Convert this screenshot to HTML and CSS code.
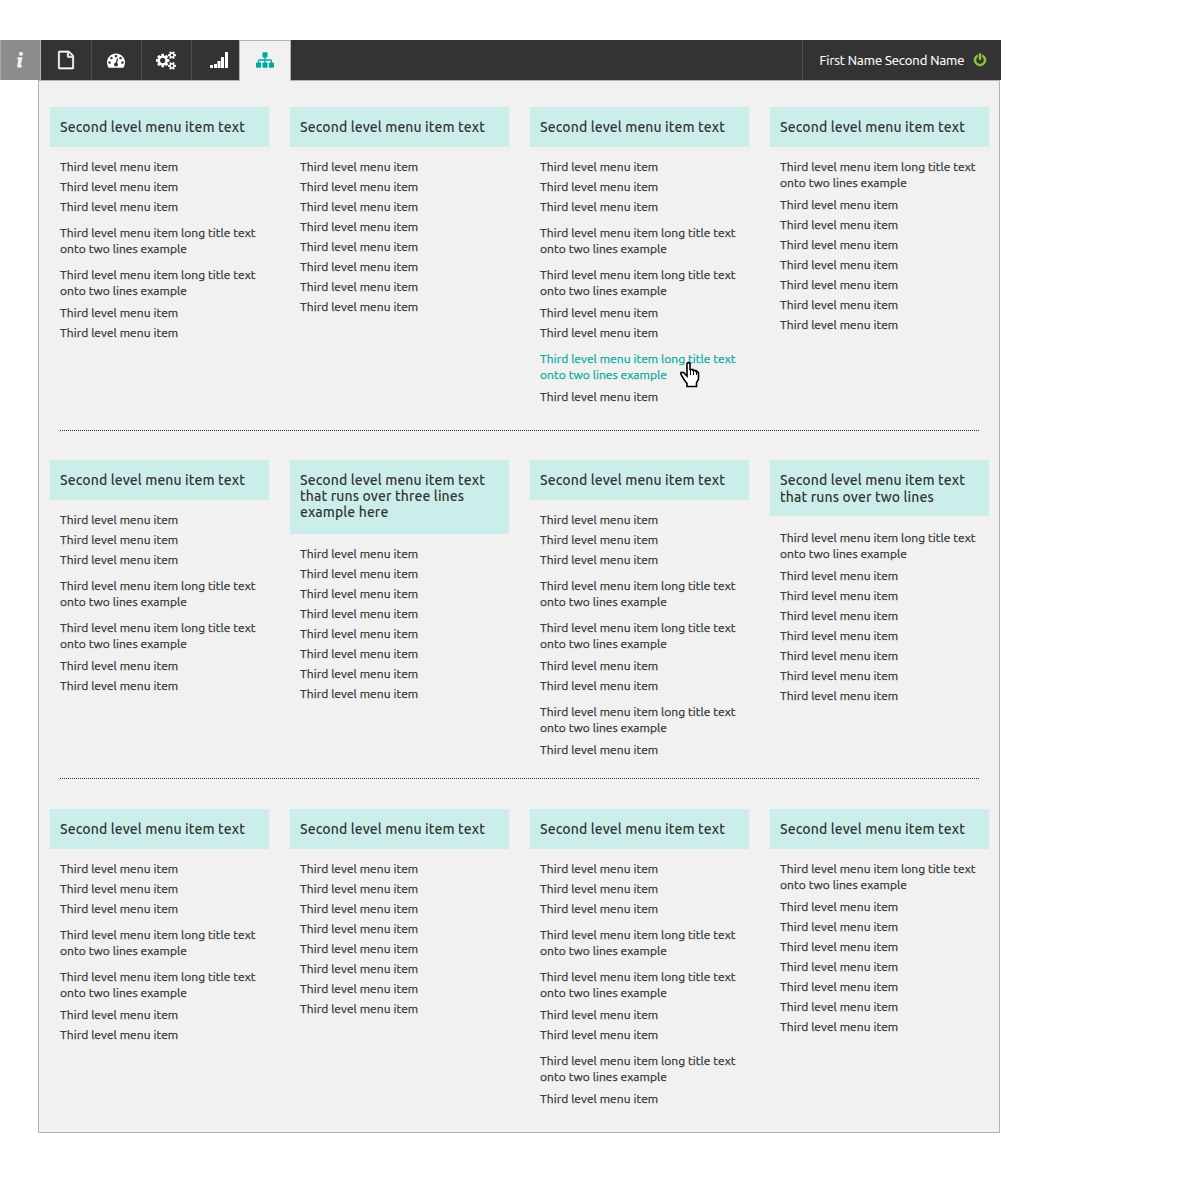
FILE: index.html
```
<!DOCTYPE html>
<html lang="en">
<head>
<meta charset="utf-8">
<title>Menu</title>
<link rel="stylesheet" href="styles.css">
</head>
<body>
<header class="bar">
  <nav class="tabs">
    <a class="tab info"><svg width="8" height="18" viewBox="0 0 8 18"><circle cx="5" cy="2.800" r="2.100"/><path d="M1.600 6.300H6.600L5 13.600Q4.800 14.600 6.200 14.200L5.800 16.300Q.9 17.900 1.200 14.200L2.400 8.500H1.100Z"/></svg></a>
    <a class="tab file"><svg width="18" height="18" viewBox="0 0 1792 1792"><path d="M1596 380q28 28 48 76t20 88v1152q0 40-28 68t-68 28h-1344q-40 0-68-28t-28-68v-1600q0-40 28-68t68-28h896q40 0 88 20t76 48zm-444-244v376h376q-10-29-22-41l-313-313q-12-12-41-22zm384 1528v-1024h-416q-40 0-68-28t-28-68v-416h-768v1536h1280z"/></svg></a>
    <a class="tab"><svg width="18" height="18" viewBox="0 0 1792 1792"><path d="M384 1152q0-53-37.5-90.5t-90.5-37.5-90.5 37.5-37.5 90.5 37.5 90.5 90.5 37.5 90.5-37.5 37.5-90.5zm192-448q0-53-37.5-90.5t-90.5-37.5-90.5 37.5-37.5 90.5 37.5 90.5 90.5 37.5 90.5-37.5 37.5-90.5zm428 481l101-382q6-26-7.5-48.5t-38.5-29.5-48 6.5-30 39.5l-101 382q-60 5-107 43.5t-63 98.5q-20 77 20 146t117 89 146-20 89-117q16-60-6-117t-72-91zm660-33q0-53-37.5-90.5t-90.5-37.5-90.5 37.5-37.5 90.5 37.5 90.5 90.5 37.5 90.5-37.5 37.5-90.5zm-640-640q0-53-37.5-90.5t-90.5-37.5-90.5 37.5-37.5 90.5 37.5 90.5 90.5 37.5 90.5-37.5 37.5-90.5zm448 192q0-53-37.5-90.5t-90.5-37.5-90.5 37.5-37.5 90.5 37.5 90.5 90.5 37.5 90.5-37.5 37.5-90.5zm320 448q0 261-141 483-19 29-54 29h-1402q-35 0-54-29-141-221-141-483 0-182 71-348t191-286 286-191 348-71 348 71 286 191 191 286 71 348z"/></svg></a>
    <a class="tab"><svg width="20" height="19" viewBox="0 0 1920 1792"><path d="M896 896q0-106-75-181t-181-75-181 75-75 181 75 181 181 75 181-75 75-181zm768 512q0-52-38-90t-90-38-90 38-38 90q0 53 37.5 90.5t90.5 37.5 90.5-37.5 37.5-90.5zm0-1024q0-52-38-90t-90-38-90 38-38 90q0 53 37.5 90.5t90.5 37.5 90.5-37.5 37.5-90.5zm-384 421v185q0 10-7 19.5t-16 10.5l-155 24q-11 35-32 76 34 48 90 115 7 11 7 20 0 12-7 19-23 30-82.5 89.5t-78.5 59.5q-11 0-21-7l-115-90q-37 19-77 31-11 108-23 155-7 24-30 24h-186q-11 0-20-7.5t-10-17.5l-23-153q-34-10-75-31l-118 89q-7 7-20 7-11 0-21-8-144-133-144-160 0-9 7-19 10-14 41-53t47-61q-23-44-35-82l-152-24q-10-1-17-9.5t-7-19.5v-185q0-10 7-19.5t16-10.5l155-24q11-35 32-76-34-48-90-115-7-11-7-20 0-12 7-20 22-30 82-89t79-59q11 0 21 7l115 90q34-18 77-32 11-108 23-154 7-24 30-24h186q11 0 20 7.5t10 17.5l23 153q34 10 75 31l118-89q8-7 20-7 11 0 21 8 144 133 144 160 0 8-7 19-12 16-42 54t-45 60q23 48 34 82l152 23q10 2 17 10.5t7 19.5zm640 533v140q0 16-149 31-12 27-30 52 51 113 51 138 0 4-4 7-122 71-124 71-8 0-46-47t-52-68q-20 2-30 2t-30-2q-14 21-52 68t-46 47q-2 0-124-71-4-3-4-7 0-25 51-138-18-25-30-52-149-15-149-31v-140q0-16 149-31 13-29 30-52-51-113-51-138 0-4 4-7 4-2 35-20t59-34 30-16q8 0 46 46.5t52 67.5q20-2 30-2t30 2q51-71 92-112l6-2q4 0 124 70 4 3 4 7 0 25-51 138 17 23 30 52 149 15 149 31zm0-1024v140q0 16-149 31-12 27-30 52 51 113 51 138 0 4-4 7-122 71-124 71-8 0-46-47t-52-68q-20 2-30 2t-30-2q-14 21-52 68t-46 47q-2 0-124-71-4-3-4-7 0-25 51-138-18-25-30-52-149-15-149-31v-140q0-16 149-31 13-29 30-52-51-113-51-138 0-4 4-7 4-2 35-20t59-34 30-16q8 0 46 46.5t52 67.5q20-2 30-2t30 2q51-71 92-112l6-2q4 0 124 70 4 3 4 7 0 25-51 138 17 23 30 52 149 15 149 31z"/></svg></a>
    <a class="tab signal"><svg width="18" height="16" viewBox="0 0 18 16"><path d="M0 13h3v3H0zM4 12h3v4H4zM7.500 9h3v7H7.500zM11 5h3v11H11zM15 0h3v16H15z"/></svg></a>
    <a class="tab active"><svg width="18" height="18" viewBox="0 0 1792 1792"><path d="M1792 1248v320q0 40-28 68t-68 28h-320q-40 0-68-28t-28-68v-320q0-40 28-68t68-28h96v-192h-512v192h96q40 0 68 28t28 68v320q0 40-28 68t-68 28h-320q-40 0-68-28t-28-68v-320q0-40 28-68t68-28h96v-192h-512v192h96q40 0 68 28t28 68v320q0 40-28 68t-68 28h-320q-40 0-68-28t-28-68v-320q0-40 28-68t68-28h96v-192q0-52 38-90t90-38h512v-192h-96q-40 0-68-28t-28-68v-320q0-40 28-68t68-28h320q40 0 68 28t28 68v320q0 40-28 68t-68 28h-96v192h512q52 0 90 38t38 90v192h96q40 0 68 28t28 68z"/></svg></a>
  </nav>
  <div class="user"><span class="name">First Name Second Name</span><svg width="14" height="14" viewBox="0 0 1792 1792"><path d="M1664 896q0 156-61 298t-164 245-245 164-298 61-298-61-245-164-164-245-61-298q0-182 80.5-343t226.5-270q43-32 95.5-25t83.5 50q32 42 24.5 94.5t-49.500 84.500q-98 74-151.500 181t-53.500 228q0 104 40.500 198.500t109.500 163.500 163.500 109.500 198.500 40.500 198.500-40.500 163.500-109.500 109.500-163.500 40.500-198.500q0-121-53.500-228t-151.500-181q-42-32-49.500-84.500t24.500-94.500q31-43 84-50t95 25q146 109 226.500 270t80.500 343zm-640-768v640q0 52-38 90t-90 38-90-38-38-90v-640q0-52 38-90t90-38 90 38 38 90z"/></svg></div>
</header>
<main class="panel" id="panel"></main>
<script src="menu.js"></script>
</body>
</html>
```
FILE: styles.css
```
body {
  margin: 0;
  padding-top: 40px;
  background: #fff;
  color: #333;
  font-family: Ubuntu, "Noto Sans", sans-serif;
}
.bar {
  display: flex;
  justify-content: space-between;
  width: 1001px;
  height: 40px;
  background: #333;
}
.tabs { display: flex; }
.tab {
  display: flex;
  align-items: center;
  justify-content: center;
  box-sizing: border-box;
  width: 50px;
  height: 40px;
  padding-right: 2px;
  border-right: 1px solid #4d4d4d;
}
.tab svg { fill: #fff; }
.file { padding-right: 1px; }
.file svg, .user svg { stroke-width: 60; }
.file svg { stroke: #fff; overflow: visible; }
.info {
  width: 41px;
  margin-right: 1px;
  background: #8c8c8c;
  border-left: 1px solid #aaa;
  border-right-color: #b2b2b2;
}
.info svg { fill: #eee; }
.signal {
  width: 47px;
  padding: 0 0 0 7px;
  border-right: 0;
}
.active {
  width: 52px;
  height: 41px;
  padding: 0 0 2px;
  position: relative;
  background: #f1f1f1;
  border: 1px solid #b2b2b2;
  border-bottom: 0;
}
.active svg { fill: #00a99d; }
.user {
  display: flex;
  align-items: center;
  box-sizing: border-box;
  width: 199px;
  padding-left: 16.5px;
  border-left: 1px solid #4d4d4d;
  color: #fff;
}
.name {
  width: 145px;
  margin-right: 8.5px;
  font-size: 13px;
  letter-spacing: -0.05px;
  white-space: nowrap;
  -webkit-text-stroke: 0.15px;
}
.user svg { fill: #8cc63f; stroke: #8cc63f; }
.panel {
  box-sizing: border-box;
  width: 962px;
  height: 1053px;
  margin-left: 38px;
  padding: 26px 0 0 11px;
  background: #f1f1f1;
  border: 1px solid #b2b2b2;
}
.row {
  display: grid;
  grid-template-columns: repeat(4, 219px);
  column-gap: 21px;
}
.rule {
  width: 920px;
  height: 1px;
  margin: 25px 0 29px 10px;
  background: repeating-linear-gradient(90deg, #333 0 1px, transparent 1px 2px);
}
.rule.second { margin: 20px 0 30px 10px; }
.heading {
  box-sizing: border-box;
  min-height: 40px;
  margin: 0;
  padding: 12px 10px;
  background: #cceeea;
  font-size: 14px;
  font-weight: 500;
  letter-spacing: 0.11px;
  line-height: 16px;
  white-space: nowrap;
}
.heading.two { padding-bottom: 10px; line-height: 17px; }
.heading.three { padding-bottom: 14px; }
.list {
  margin: 12px 0 0 10px;
  padding: 0;
  list-style: none;
  font-size: 12px;
  letter-spacing: 0.065px;
  line-height: 16px;
  white-space: nowrap;
  -webkit-text-stroke: 0.25px;
}
.two + .list { margin-top: 14px; }
.item { margin-bottom: 4px; }
.long { margin: 10px 0 6px; }
.item:first-child { margin-top: 0; }
.item:last-child { margin-bottom: 0; }
.hover { position: relative; color: #00a99d; }
.cursor { position: absolute; left: 139px; top: 10px; }
```
FILE: menu.js
```
const HEADINGS = {
  1: ['Second level menu item text'],
  2: ['Second level menu item text', 'that runs over two lines'],
  3: ['Second level menu item text', 'that runs over three lines', 'example here'],
};
const CURSOR = '<svg class="cursor" width="22" height="28" viewBox="0 0 22 28"><path d="M8 2.500Q9.500 .8 11 2.500V8.500H14V9.500H17V10.500H18.500L19.500 12V18L17.500 22V25.500H8V22.500L5 18.500L2 13.500V11.500H4.500L8 15Z" fill="#fff" stroke="#000" stroke-width="1.600"/><path d="M11.500 8v6M14.500 9v5M17.500 11v3" stroke="#000"/></svg>';

// s = single-line item, l = long item, h = long item under the pointer
const ROWS = [
  [[1, 'sssllss'], [1, 'ssssssss'], [1, 'sssllsshs'], [1, 'lsssssss']],
  [[1, 'sssllss'], [3, 'ssssssss'], [1, 'sssllssls'], [2, 'lsssssss']],
  [[1, 'sssllss'], [1, 'ssssssss'], [1, 'sssllssls'], [1, 'lsssssss']],
];
const SIZES = { 1: '', 2: ' two', 3: ' three' };

function item(kind) {
  if (kind === 's') return '<li class="item"><span>Third level menu item</span></li>';
  const hover = kind === 'h';
  return `<li class="item long${hover ? ' hover' : ''}"><span>Third level menu item long title text</span><br><span>onto two lines example</span>${hover ? CURSOR : ''}</li>`;
}
function column([lines, kinds]) {
  return `<section><h2 class="heading${SIZES[lines]}">${HEADINGS[lines].join('<br>')}</h2><ul class="list">${[...kinds].map(item).join('')}</ul></section>`;
}
const rules = ['<div class="rule"></div>', '<div class="rule second"></div>', ''];
document.getElementById('panel').innerHTML = ROWS
  .map((row, i) => `<div class="row">${row.map(column).join('')}</div>${rules[i]}`)
  .join('');
```
